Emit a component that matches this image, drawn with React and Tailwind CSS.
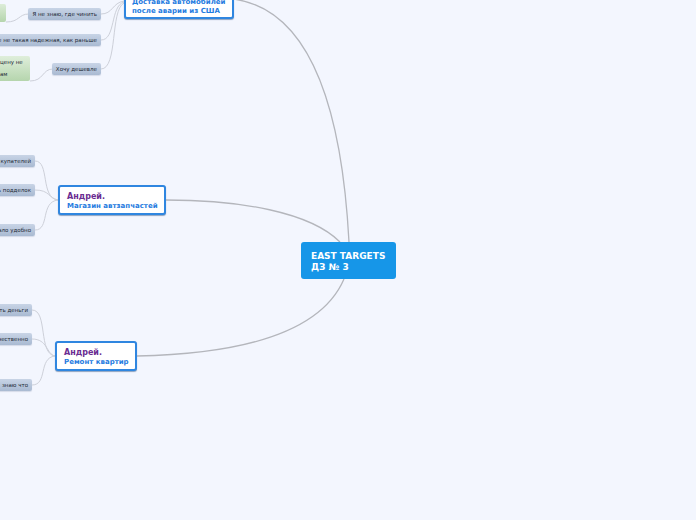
import React from 'react';

const font = "font-['DejaVu_Sans',sans-serif]";

// connector lines between the topics, in page coordinates
const mainLinks = [
  'M349 242 C343 130 318 10 233 -1',
  'M166 200 C240 200 310 212 340 242',
  'M137 356 C235 354 320 335 344 279',
];

const leafLinks = [
  'M124 1 C112 3 113 14 101 14',
  'M124 2 C110 6 116 40 101 40',
  'M124 3 C110 10 118 69 101 69',
  'M29 14 C18 14 20 22 6 22',
  'M53 69 C42 69 44 81 30 81',
  'M58 200 C40 198 50 161 35 161',
  'M58 200 C48 198 50 190 35 190',
  'M58 200 C40 202 50 230 35 230',
  'M55 356 C38 354 48 310 32 310',
  'M55 356 C46 354 48 339 32 339',
  'M55 356 C38 358 48 385 32 385',
];

const leaves = [
  { pos: 'right-[595px] top-[8px]', text: 'Я не знаю, где чинить' },
  { pos: 'right-[595px] top-[34px]', text: 'е не такая надежная, как раньше' },
  { pos: 'right-[595px] top-[63px]', text: 'Хочу дешевле' },
  { pos: 'right-[661px] top-[155px]', text: 'купателей' },
  { pos: 'right-[661px] top-[184px]', text: 'ь подделок' },
  { pos: 'right-[661px] top-[224px]', text: 'ало удобно' },
  { pos: 'right-[664px] top-[304px]', text: 'ть деньги' },
  { pos: 'right-[664px] top-[333px]', text: 'чественно' },
  { pos: 'right-[664px] top-[379px]', text: 'знаю что' },
];

function Leaf({ pos, text }) {
  return (
    <div className={`absolute ${pos} h-[12px] px-[4px] rounded-[2px] bg-gradient-to-b from-[#c8d4e6] to-[#a9bad2] text-[5.5px] leading-[12px] text-[#222a36] whitespace-nowrap shadow-[0_1px_1px_#d5dbe8]`}>
      {text}
    </div>
  );
}

function Topic({ pos, name, title }) {
  return (
    <div className={`absolute ${pos} bg-white border-2 border-[#2f86e0] rounded-[3px] pl-[7px] pt-[5px] shadow-[0_1px_1px_#8da3c0] whitespace-nowrap font-bold`}>
      <div className="text-[8px] leading-[10px] text-[#6a2c91]">{name}</div>
      <div className="text-[7px] leading-[9px] text-[#1f7be0]">{title}</div>
    </div>
  );
}

export default function App() {
  return (
    <div className={`relative w-[696px] h-[520px] overflow-hidden bg-[#f3f6fe] ${font}`}>
      <svg className="absolute inset-0" width="696" height="520" fill="none">
        {mainLinks.map((d, i) => (
          <path key={i} d={d} stroke="#b4b6bc" strokeWidth="1.3" />
        ))}
        {leafLinks.map((d, i) => (
          <path key={i} d={d} stroke="#cdd0d9" strokeWidth="1" />
        ))}
      </svg>

      {/* green notes, cut by the left edge */}
      <div className="absolute left-[-10px] top-[4px] w-[16px] h-[18px] rounded-[2px] bg-gradient-to-b from-[#dcecd8] to-[#b5d5ad]" />
      <div className="absolute left-[-10px] top-[56px] w-[40px] h-[25px] rounded-[2px] bg-gradient-to-b from-[#dfeedb] to-[#b5d5ad] pl-[10px] pt-[3px] text-[5.5px] leading-[6px] text-[#222a36] whitespace-nowrap">
        <div>цену не</div>
        <div className="mt-[6px]">ам</div>
      </div>

      {leaves.map((leaf) => (
        <Leaf key={leaf.text} {...leaf} />
      ))}

      <div className="absolute left-[124px] top-[-14px] w-[110px] h-[33px] bg-white border-2 border-[#2f86e0] rounded-[3px] pl-[6px] pt-[10px] shadow-[0_1px_1px_#8da3c0] whitespace-nowrap font-bold text-[7px] leading-[9px] text-[#1f7be0]">
        <div>Доставка автомобилей</div>
        <div>после аварии из США</div>
      </div>

      <Topic pos="left-[58px] top-[185px] w-[108px] h-[30px]" name="Андрей." title="Магазин автзапчастей" />
      <Topic pos="left-[55px] top-[341px] w-[82px] h-[30px]" name="Андрей." title="Ремонт квартир" />

      <div className="absolute left-[301px] top-[242px] w-[95px] h-[37px] bg-[#1696e8] rounded-[3px] pl-[10px] pt-[9px] whitespace-nowrap font-bold text-[9px] leading-[11px] text-white">
        <div>EAST TARGETS</div>
        <div>ДЗ № 3</div>
      </div>
    </div>
  );
}
